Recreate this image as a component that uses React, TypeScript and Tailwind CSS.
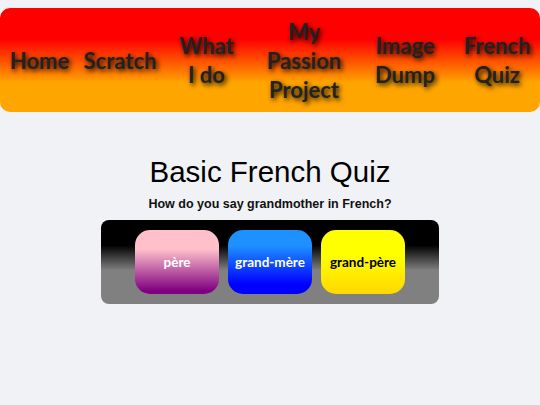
import { useState } from "react";

const links = [
  { label: ["Home"], w: "w-[79px]" },
  { label: ["Scratch"], w: "w-[82px]" },
  { label: ["What", "I do"], w: "w-[91px]" },
  { label: ["My", "Passion", "Project"], w: "w-[104px]" },
  { label: ["Image", "Dump"], w: "w-[98px]" },
  { label: ["French", "Quiz"], w: "w-[86px]" },
];

const answers = [
  { text: "père", cls: "bg-[linear-gradient(#ffc0cb_30%,#800080_95%)] text-white" },
  { text: "grand-mère", cls: "bg-[linear-gradient(#1e90ff_25%,#0000ff_85%)] text-white" },
  { text: "grand-père", cls: "bg-[linear-gradient(#ffff00_40%,#ffd700_100%)] text-black" },
];

export default function App() {
  const [picked, setPicked] = useState<string | null>(null);

  return (
    <div className="min-h-[405px] bg-[#f0f2f5] pt-2">
      <nav className="flex items-center h-[104px] rounded-[10px] bg-[linear-gradient(#ff0000_30%,#ffa500_72%)] font-['Lato',sans-serif]">
        {links.map((l) => (
          <a
            key={l.label.join(" ")}
            href="#"
            className={`${l.w} shrink-0 text-center text-[22px] font-bold leading-[29px] text-[#222] [text-shadow:2px_2px_5px_rgba(0,0,0,0.95)]`}
          >
            {l.label.map((line) => (
              <div key={line}>{line}</div>
            ))}
          </a>
        ))}
      </nav>

      <main className="flex flex-col items-center mt-[40px] font-['Liberation_Sans',Arial,sans-serif]">
        <h1 className="text-[29.5px] leading-[40px] text-black">Basic French Quiz</h1>
        <p className="mt-[3px] text-[12.5px] font-bold leading-[18px] text-[#111]">
          How do you say grandmother in French?
        </p>
        <div className="mt-[7px] w-[338px] flex justify-center gap-[9px] py-[10px] rounded-[8px] bg-[linear-gradient(#000000_30%,#808080_60%)]">
          {answers.map((a) => (
            <button
              key={a.text}
              onClick={() => setPicked(a.text)}
              className={`w-[84px] h-[64px] rounded-[15px] text-[13.5px] font-bold font-['Lato',sans-serif] ${a.cls} ${picked === a.text ? "ring-2 ring-white" : ""}`}
            >
              {a.text}
            </button>
          ))}
        </div>
      </main>
    </div>
  );
}
